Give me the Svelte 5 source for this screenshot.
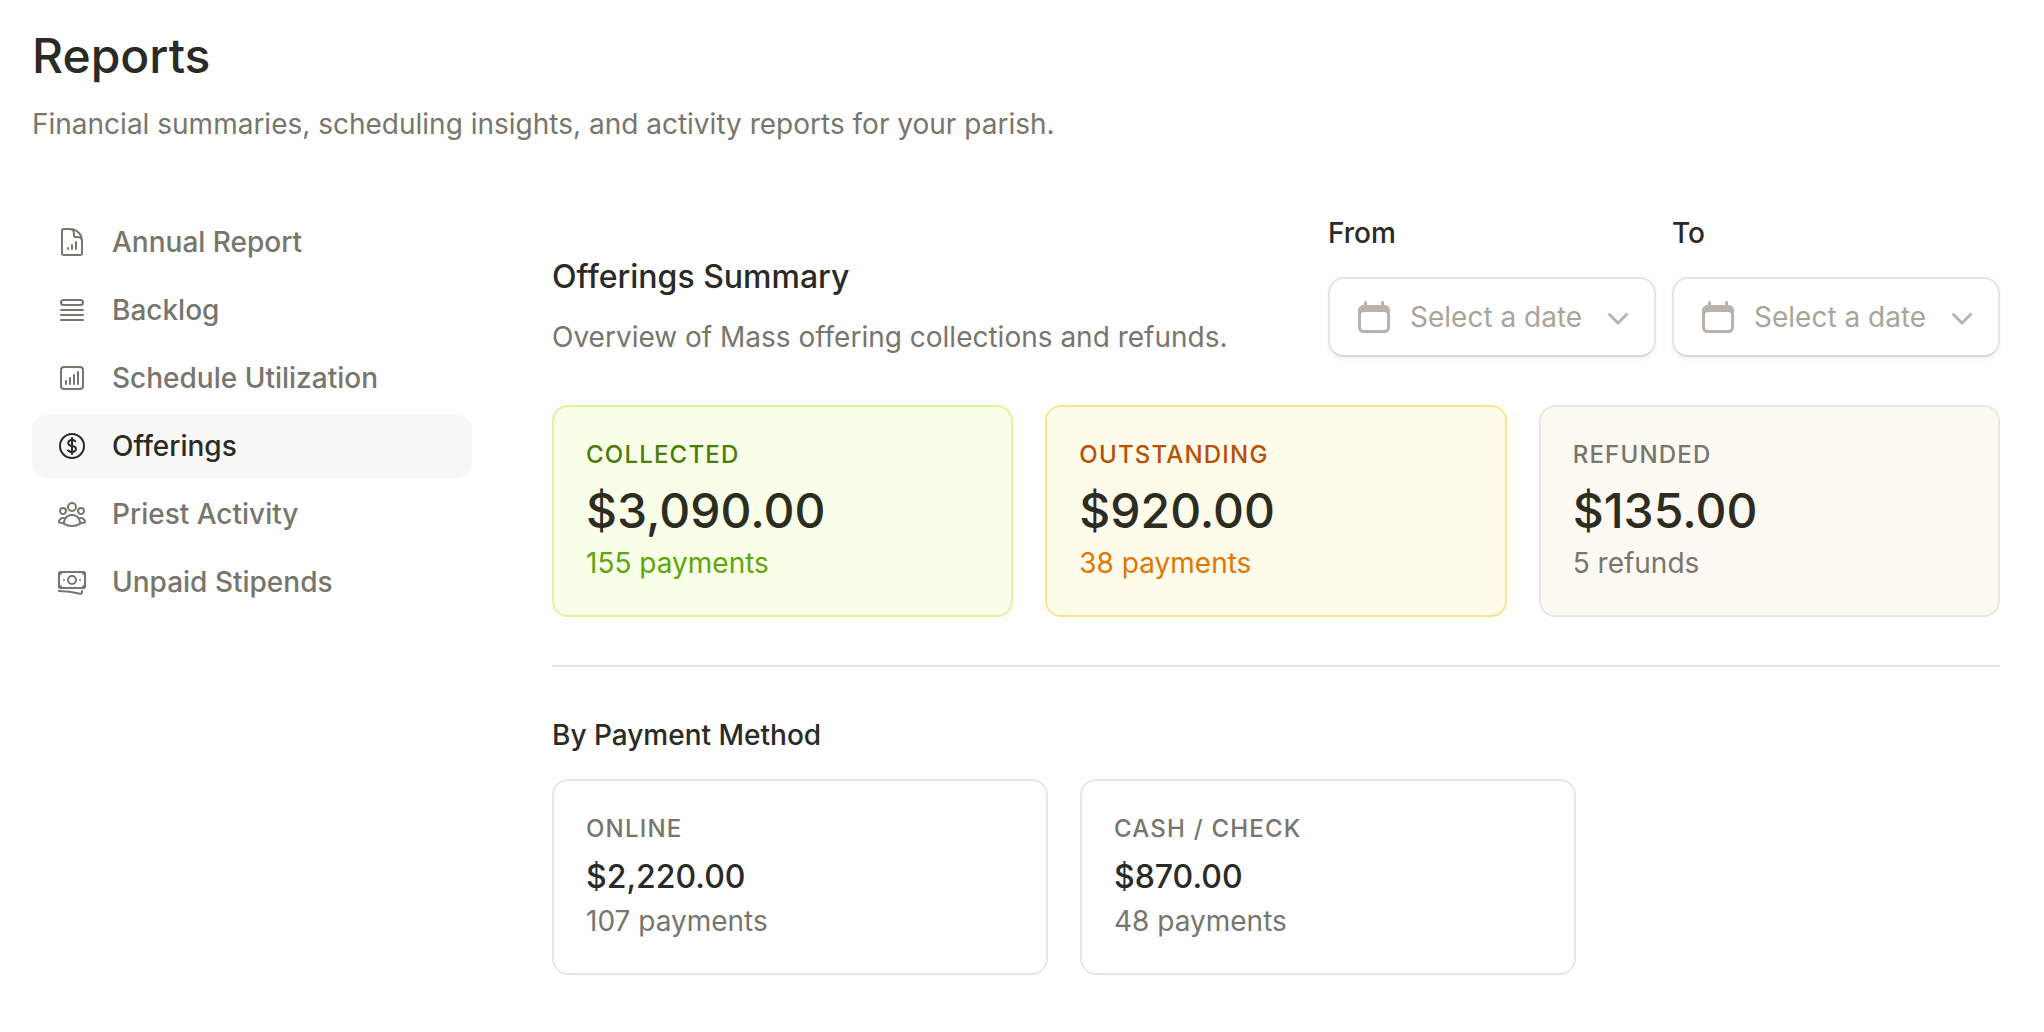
<script>
	const icons = {
		annual: "M19.5 14.25v-2.625a3.375 3.375 0 0 0-3.375-3.375h-1.5A1.125 1.125 0 0 1 13.5 7.125v-1.5a3.375 3.375 0 0 0-3.375-3.375H8.25M9 16.5v.75m3-3v3M15 12v5.25m-4.5-15H5.625c-.621 0-1.125.504-1.125 1.125v17.25c0 .621.504 1.125 1.125 1.125h12.75c.621 0 1.125-.504 1.125-1.125V11.25a9 9 0 0 0-9-9Z",
		backlog: "M3.75 12h16.5m-16.5 3.75h16.5M3.75 19.5h16.5M5.625 4.5h12.75a1.875 1.875 0 0 1 0 3.75H5.625a1.875 1.875 0 0 1 0-3.75Z",
		schedule: "M7.5 14.25v2.25m3-4.5v4.5m3-6.75v6.75m3-9v9M6 20.25h12A2.25 2.25 0 0 0 20.25 18V6A2.25 2.25 0 0 0 18 3.75H6A2.25 2.25 0 0 0 3.75 6v12A2.25 2.25 0 0 0 6 20.25Z",
		offerings: "M12 6v12m-3-2.818.879.659c1.171.879 3.07.879 4.242 0 1.172-.879 1.172-2.303 0-3.182C13.536 12.219 12.768 12 12 12c-.725 0-1.45-.22-2.003-.659-1.106-.879-1.106-2.303 0-3.182s2.9-.879 4.006 0l.415.33M21 12a9 9 0 1 1-18 0 9 9 0 0 1 18 0Z",
		priest: "M18 18.72a9.094 9.094 0 0 0 3.741-.479 3 3 0 0 0-4.682-2.72m.94 3.198.001.031c0 .225-.012.447-.037.666A11.944 11.944 0 0 1 12 21c-2.17 0-4.207-.576-5.963-1.584A6.062 6.062 0 0 1 6 18.719m12 0a5.971 5.971 0 0 0-.941-3.197m0 0A5.995 5.995 0 0 0 12 12.75a5.995 5.995 0 0 0-5.058 2.772m0 0a3 3 0 0 0-4.681 2.72 8.986 8.986 0 0 0 3.74.477m.94-3.197a5.971 5.971 0 0 0-.94 3.197M15 6.75a3 3 0 1 1-6 0 3 3 0 0 1 6 0Zm6 3a2.25 2.25 0 1 1-4.5 0 2.25 2.25 0 0 1 4.5 0Zm-13.5 0a2.25 2.25 0 1 1-4.5 0 2.25 2.25 0 0 1 4.5 0Z",
		unpaid: "M2.25 18.75a60.07 60.07 0 0 1 15.797 2.101c.727.198 1.453-.342 1.453-1.096V18.75M3.75 4.5v.75A.75.75 0 0 1 3 6h-.75m0 0v-.375c0-.621.504-1.125 1.125-1.125H20.25M2.25 6v9m18-10.5v.75c0 .414.336.75.75.75h.75m-1.5-1.5h.375c.621 0 1.125.504 1.125 1.125v9.75c0 .621-.504 1.125-1.125 1.125h-.375m1.5-1.5H21a.75.75 0 0 0-.75.75v.75m0 0H3.75m0 0h-.375a1.125 1.125 0 0 1-1.125-1.125V15m1.5 1.5v-.75A.75.75 0 0 0 3 15h-.75M15 10.5a3 3 0 1 1-6 0 3 3 0 0 1 6 0Zm3 0h.008v.008H18V10.5Zm-12 0h.008v.008H6V10.5Z"
	};

	const reports = [
		{ id: "annual", name: "Annual Report" },
		{ id: "backlog", name: "Backlog" },
		{ id: "schedule", name: "Schedule Utilization" },
		{ id: "offerings", name: "Offerings" },
		{ id: "priest", name: "Priest Activity" },
		{ id: "unpaid", name: "Unpaid Stipends" }
	];

	const totals = [
		{ label: "Collected", amount: 3090, note: "155 payments", tone: "lime" },
		{ label: "Outstanding", amount: 920, note: "38 payments", tone: "amber" },
		{ label: "Refunded", amount: 135, note: "5 refunds", tone: "stone" }
	];

	const methods = [
		{ label: "Online", amount: 2220, note: "107 payments" },
		{ label: "Cash / Check", amount: 870, note: "48 payments" }
	];

	let current = $state("offerings");

	function money(n) {
		return n.toLocaleString("en-US", { style: "currency", currency: "USD" });
	}

	function pick(event, id) {
		event.preventDefault();
		current = id;
	}
</script>

{#snippet datePicker(id, label)}
	<div class="field">
		<label for={id}>{label}</label>
		<button type="button" {id} class="date">
			<svg viewBox="0 0 20 20" aria-hidden="true">
				<path fill-rule="evenodd" d="M5.75 2a.75.75 0 0 1 .75.75V4h7V2.75a.75.75 0 0 1 1.5 0V4h.25A2.75 2.75 0 0 1 18 6.75v8.5A2.75 2.75 0 0 1 15.25 18H4.75A2.75 2.75 0 0 1 2 15.25v-8.5A2.75 2.75 0 0 1 4.75 4H5V2.75A.75.75 0 0 1 5.75 2Zm-1 5.5c-.69 0-1.25.56-1.25 1.25v6.5c0 .69.56 1.25 1.25 1.25h10.5c.69 0 1.25-.56 1.25-1.25v-6.5c0-.69-.56-1.25-1.25-1.25H4.75Z" />
			</svg>
			<span>Select a date</span>
			<svg class="chevron" viewBox="0 0 20 20" aria-hidden="true">
				<path d="M5.22 8.22a.75.75 0 0 1 1.06 0L10 11.94l3.72-3.72a.75.75 0 1 1 1.06 1.06l-4.25 4.25a.75.75 0 0 1-1.06 0L5.22 9.28a.75.75 0 0 1 0-1.06Z" />
			</svg>
		</button>
	</div>
{/snippet}

<div class="page">
	<header>
		<h1>Reports</h1>
		<p>Financial summaries, scheduling insights, and activity reports for your parish.</p>
	</header>

	<div class="columns">
		<nav aria-label="Reports">
			{#each reports as report}
				<a href="#{report.id}" class:current={current === report.id} onclick={(e) => pick(e, report.id)}>
					<svg viewBox="0 0 24 24" aria-hidden="true"><path d={icons[report.id]} /></svg>
					{report.name}
				</a>
			{/each}
		</nav>

		<main>
			<div class="top">
				<div>
					<h2>Offerings Summary</h2>
					<p>Overview of Mass offering collections and refunds.</p>
				</div>
				<div class="dates">
					{@render datePicker("from", "From")}
					{@render datePicker("to", "To")}
				</div>
			</div>

			<div class="totals">
				{#each totals as t}
					<div class="card {t.tone}">
						<div class="label">{t.label}</div>
						<div class="amount big">{money(t.amount)}</div>
						<div class="note">{t.note}</div>
					</div>
				{/each}
			</div>

			<hr />

			<h3>By Payment Method</h3>
			<div class="methods">
				{#each methods as m}
					<div class="card">
						<div class="label">{m.label}</div>
						<div class="amount">{money(m.amount)}</div>
						<div class="note">{m.note}</div>
					</div>
				{/each}
			</div>
		</main>
	</div>
</div>

<style>
	:global(body) {
		background: #fefefe;
		color: #2a2a27;
		font-family: Inter, "Liberation Sans", sans-serif;
		font-size: 28px;
		line-height: 40px;
	}

	h1, h2, h3, p {
		margin: 0;
		font-weight: 500;
	}

	p {
		color: #77766d;
		font-weight: 400;
	}

	.page {
		padding: 24px 44px 48px 32px;
	}

	h1 {
		font-size: 48px;
		line-height: 64px;
		margin-bottom: 16px;
	}

	.columns {
		display: grid;
		grid-template-columns: 440px minmax(0, 1fr);
		gap: 80px;
		margin-top: 66px;
	}

	nav {
		display: flex;
		flex-direction: column;
		gap: 4px;
	}

	nav a {
		display: flex;
		align-items: center;
		gap: 24px;
		height: 64px;
		padding: 0 24px;
		border-radius: 16px;
		color: #77766d;
		font-weight: 500;
		text-decoration: none;
	}

	nav a.current {
		background: #f7f7f5;
		color: #2a2a27;
	}

	nav svg {
		width: 32px;
		height: 32px;
		fill: none;
		stroke: currentColor;
		stroke-width: 1.5;
		stroke-linecap: round;
		stroke-linejoin: round;
	}

	main {
		padding-top: 3px;
	}

	.top {
		display: flex;
		justify-content: space-between;
		align-items: flex-end;
	}

	h2 {
		font-size: 32px;
		line-height: 48px;
		margin-bottom: 16px;
	}

	h3 {
		font-size: 28px;
	}

	.dates {
		display: flex;
		gap: 16px;
	}

	.field {
		display: flex;
		flex-direction: column;
		gap: 24px;
	}

	label {
		font-weight: 500;
	}

	.date {
		display: flex;
		align-items: center;
		gap: 16px;
		width: 328px;
		height: 80px;
		padding: 0 16px 0 24px;
		border: 2px solid #e6e5df;
		border-bottom-color: #d9d8d2;
		border-radius: 16px;
		background: white;
		box-shadow: 0 2px 4px rgb(0 0 0 / 5%);
		color: #a8a599;
		font: inherit;
		white-space: nowrap;
	}

	.date svg {
		flex: none;
		width: 40px;
		height: 40px;
		fill: #bab3ad;
	}

	/* the label may run under the chevron's empty edge */
	.date span {
		flex: 1;
		min-width: 0;
		text-align: left;
	}

	.totals {
		display: grid;
		grid-template-columns: repeat(3, 1fr);
		gap: 32px;
		margin-top: 48px;
	}

	.methods {
		display: grid;
		grid-template-columns: repeat(2, 1fr);
		gap: 32px;
		max-width: 1024px;
		margin-top: 24px;
	}

	.card {
		padding: 32px;
		border: 2px solid #e8e8e1;
		border-radius: 16px;
	}

	.label {
		color: #77766d;
		font-size: 24px;
		line-height: 32px;
		font-weight: 500;
		letter-spacing: 0.05em;
		text-transform: uppercase;
	}

	.amount {
		margin-top: 8px;
		font-size: 32px;
		line-height: 48px;
		font-weight: 500;
	}

	.amount.big {
		color: #2d2c21;
		font-size: 48px;
		line-height: 64px;
	}

	.note {
		color: #77766d;
	}

	.lime {
		background: #f8fee8;
		border-color: #dcf6a0;
	}

	.lime .label {
		color: #4a7d05;
	}

	.lime .note {
		color: #62a508;
	}

	.amber {
		background: #fffbeb;
		border-color: #f8e58e;
	}

	.amber .label {
		color: #b85005;
	}

	.amber .note {
		color: #de7804;
	}

	.stone {
		background: #fcf9f3;
	}

	hr {
		height: 2px;
		margin: 48px 0;
		border: 0;
		background: #e3e3e0;
	}
</style>
